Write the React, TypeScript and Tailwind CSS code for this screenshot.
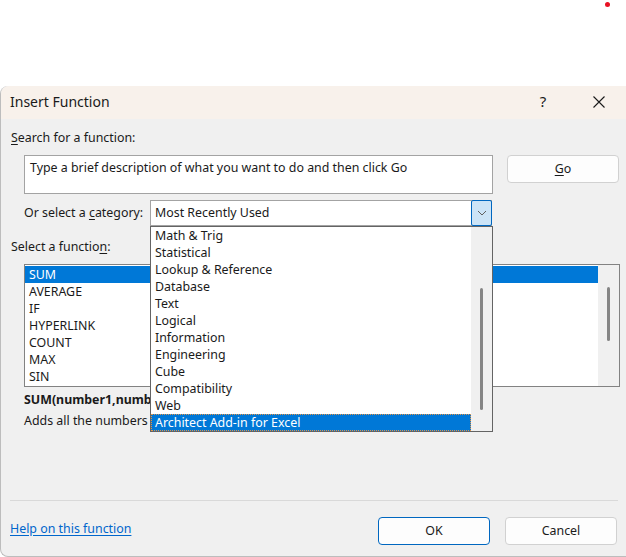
import React from 'react';

const FONT = { fontFamily: '"Segoe UI", "Noto Sans", sans-serif' };

const categories = [
  'Math & Trig',
  'Statistical',
  'Lookup & Reference',
  'Database',
  'Text',
  'Logical',
  'Information',
  'Engineering',
  'Cube',
  'Compatibility',
  'Web',
  'Architect Add-in for Excel',
];

const functions = ['SUM', 'AVERAGE', 'IF', 'HYPERLINK', 'COUNT', 'MAX', 'SIN'];

function CloseIcon() {
  return (
    <svg width="14" height="14" viewBox="0 0 14 14" className="text-[#1a1a1a]">
      <path d="M1.5 1.5 L12.5 12.5 M12.5 1.5 L1.5 12.5" stroke="currentColor" strokeWidth="1.1" fill="none" />
    </svg>
  );
}

function Chevron() {
  return (
    <svg width="10" height="6" viewBox="0 0 10 6">
      <path d="M1 1 L5 5 L9 1" stroke="#606060" strokeWidth="1" fill="none" />
    </svg>
  );
}

export default function App() {
  return (
    <div className="relative w-[626px] h-[557px] overflow-hidden bg-white text-[12.4px] text-[#1a1a1a]" style={FONT}>
      {/* stray red dot */}
      <div className="absolute left-[605px] top-[2px] w-[5px] h-[5px] rounded-full bg-[#e81123]" />

      <div className="relative mt-[86px] h-[471px] w-[640px] rounded-l-[8px] border-l border-b border-[#bdbdbd] bg-[#f0f0f0] flex flex-col">
        {/* Title bar */}
        <div className="h-[33px] shrink-0 flex items-center bg-[#f8f1eb] rounded-tl-[8px]">
          <span className="pl-[9px] text-[14px] text-[#1a1a1a] -mt-[3px]">Insert Function</span>
          <span className="ml-auto w-[20px] text-center text-[15px] mr-[36px] -mt-[2px]">?</span>
          <div className="w-[20px] flex justify-center mr-[31px] -mt-[2px]">
            <CloseIcon />
          </div>
        </div>

        {/* Body */}
        <div className="pl-[10px] mt-[11px] leading-[16px]">
          <span className="underline underline-offset-2">S</span>earch for a function:
        </div>

        <div className="flex mt-[9px] pl-[23px]">
          <div className="w-[469px] h-[39px] bg-white border border-[#a3a3a3] px-[5px] pt-[4px] leading-[16px]">
            Type a brief description of what you want to do and then click Go
          </div>
          <button className="ml-[14px] w-[112px] h-[28px] rounded-[4px] border border-[#d1d1d1] bg-[#fdfdfd] leading-[16px]">
            <span className="underline underline-offset-2">G</span>o
          </button>
        </div>

        <div className="flex items-center mt-[6px] pl-[23px]">
          <div className="w-[126px] leading-[16px]">
            Or select a <span className="underline underline-offset-2">c</span>ategory:
          </div>
          <div className="w-[342px] h-[26px] bg-white border border-[#a3a3a3] flex items-center">
            <span className="pl-[4px] flex-1 leading-[16px]">Most Recently Used</span>
            <div className="w-[21px] h-[26px] -mr-px -my-px border border-[#0067c0] bg-[#cce4f7] rounded-[2px] flex items-center justify-center">
              <Chevron />
            </div>
          </div>
        </div>

        <div className="pl-[10px] mt-[13px] leading-[16px]">
          Select a functio<span className="underline underline-offset-2">n</span>:
        </div>

        <div className="ml-[23px] mt-[9px] w-[596px] h-[123px] border border-[#828282] bg-white flex">
          <div className="flex-1 pt-[1px]">
            {functions.map((f, i) => (
              <div
                key={f}
                className={`h-[17px] leading-[18px] pl-[4px] ${i === 0 ? 'bg-[#0078d7] text-white' : ''}`}
              >
                {f}
              </div>
            ))}
          </div>
          <div className="w-[21px] bg-[#f0f0f0] flex justify-center pt-[22px]">
            <div className="w-[3px] h-[54px] rounded-full bg-[#858585]" />
          </div>
        </div>

        <div className="pl-[23px] mt-[5px] font-bold leading-[16px]">SUM(number1,number2,...)</div>
        <div className="pl-[23px] mt-[5px] leading-[16px]">Adds all the numbers in a range of cells.</div>

        <div className="flex-1" />

        <div className="ml-[9px] w-[608px] h-px bg-[#d9d9d9]" />

        <div className="flex items-center mt-[16px] mb-[11px] pl-[9px]">
          <a href="#" className="text-[#0066cc] underline underline-offset-2 leading-[16px] mb-[5px]">
            Help on this function
          </a>
          <button className="ml-auto w-[112px] h-[28px] rounded-[4px] border border-[#0067c0] bg-[#fdfdfd] leading-[16px]">
            OK
          </button>
          <button className="ml-[15px] mr-[23px] w-[112px] h-[28px] rounded-[4px] border border-[#d1d1d1] bg-[#fdfdfd] leading-[16px]">
            Cancel
          </button>
        </div>

        {/* Category dropdown list, open over the dialog */}
        <div className="absolute left-[149px] top-[140px] w-[343px] h-[206px] border border-[#646464] bg-[#f0f0f0] flex">
          <div className="w-[320px] bg-white">
            {categories.map((c, i) => (
              <div
                key={c}
                className={`h-[17px] leading-[18px] pl-[4px] ${
                  i === categories.length - 1
                    ? 'bg-[#0078d7] text-white outline outline-1 outline-dotted -outline-offset-1 outline-[#e0944a]'
                    : ''
                }`}
              >
                {c}
              </div>
            ))}
          </div>
          <div className="flex-1 flex justify-center pt-[61px]">
            <div className="w-[3px] h-[122px] rounded-full bg-[#858585]" />
          </div>
        </div>
      </div>
    </div>
  );
}
